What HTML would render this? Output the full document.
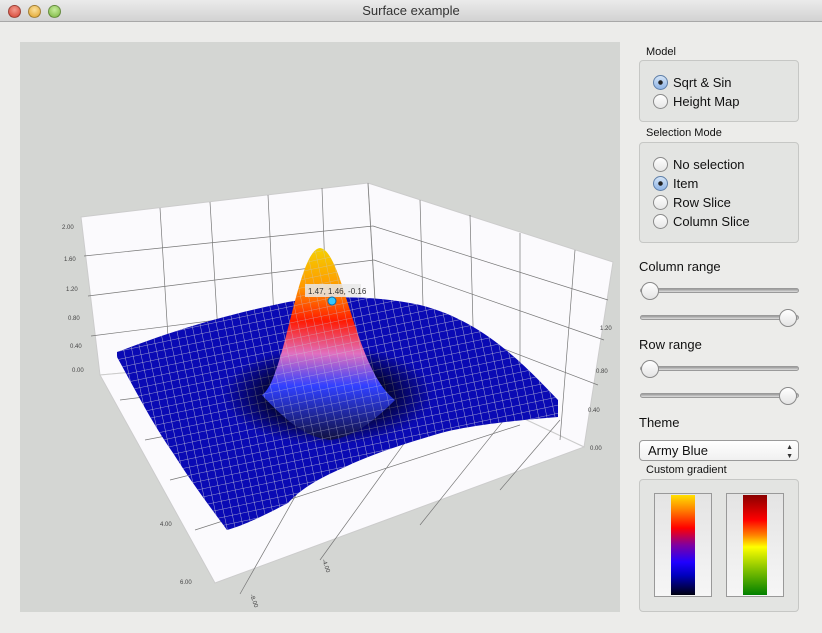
<!DOCTYPE html>
<html><head><meta charset="utf-8"><style>
*{margin:0;padding:0;box-sizing:border-box}
body{width:822px;height:633px;overflow:hidden;background:#ececea;font-family:"Liberation Sans",sans-serif;position:relative;color:#111}
.tb{position:absolute;left:0;top:0;width:822px;height:22px;background:linear-gradient(#ebebeb,#d2d2d2);border-bottom:1px solid #a8a8a8;text-align:center;font-size:13px;line-height:22px;color:#333}
.tl{position:absolute;top:5px;width:13px;height:13px;border-radius:50%;border:1px solid rgba(0,0,0,.3)}
.a{position:absolute}
.lbl{position:absolute;font-size:11px}
.big{position:absolute;font-size:13px}
.box{position:absolute;background:#e3e4e2;border:1px solid #c6c7c5;border-radius:4px}
.rad{position:absolute;width:15px;height:15px;border-radius:50%;border:1px solid #8a8a8a;background:linear-gradient(#fff,#e6e6e6)}
.rad.on{background:radial-gradient(circle,#222 0 2px,transparent 2.5px),linear-gradient(#d4e4f6,#8fb4e6);border-color:#5f7fa8}
.rt{position:absolute;font-size:13px}
.trk{position:absolute;left:640px;width:159px;height:5px;border-radius:3px;background:linear-gradient(#999,#ddd);border:1px solid #9a9a9a}
.knob{position:absolute;width:18px;height:18px;border-radius:50%;border:1px solid #8a8a8a;background:linear-gradient(#fff,#e4e4e4)}
</style></head><body>
<div class="tb">Surface example
<div class="tl" style="left:8px;background:radial-gradient(circle at 50% 35%,#f29a8e,#d5402f)"></div>
<div class="tl" style="left:28px;background:radial-gradient(circle at 50% 35%,#fbe09b,#e0a228)"></div>
<div class="tl" style="left:48px;background:radial-gradient(circle at 50% 35%,#c6ec9c,#79b53d)"></div>
</div>
<svg class="a" style="left:20px;top:42px" width="600" height="570" viewBox="20 42 600 570">
<defs>
<linearGradient id="pk" x1="0" y1="0" x2="0" y2="1">
<stop offset="0" stop-color="#f4d000"/><stop offset=".2" stop-color="#ff9a00"/><stop offset=".38" stop-color="#ff1a00"/><stop offset=".55" stop-color="#e070c0"/><stop offset=".72" stop-color="#3040ff"/><stop offset="1" stop-color="#101040"/></linearGradient>
<pattern id="mesh" width="8" height="8" patternUnits="userSpaceOnUse" patternTransform="rotate(-12)"><path d="M0 0H8M0 0V8" stroke="#c8c8d8" stroke-width="0.8"/></pattern>
<radialGradient id="hole" cx="0.5" cy="0.5" r="0.5"><stop offset=".45" stop-color="#000"/><stop offset="1" stop-color="#000" stop-opacity="0"/></radialGradient>
</defs>
<rect x="20" y="42" width="600" height="570" fill="#d4d6d3"/>
<polygon points="81,217 368,183 378,350 100,375" fill="#fbfafd" stroke="#ccc"/>
<polygon points="368,183 613,262 584,447 378,350" fill="#fbfafd" stroke="#ccc"/>
<polygon points="100,375 378,350 584,447 215,583" fill="#fbfafd" stroke="#ccc"/>
<g stroke="#777" stroke-width=".7" fill="none">
<path d="M84,256 373,226 M88,296 374,260 M91,336 376,300 M160,208 170,370 M210,202 220,366 M268,195 276,360 M322,188 328,355 M368,183 378,350"/>
<path d="M373,226 608,300 M374,260 604,340 M376,300 598,385 M420,200 425,375 M470,215 475,398 M520,233 520,420 M575,250 560,440"/>
<path d="M120,400 400,365 M145,440 430,385 M170,480 470,405 M195,530 520,425 M240,594 378,350 M320,560 450,380 M420,525 520,400 M500,490 560,420"/>
</g>
<g font-size="6" fill="#444">
<text x="62" y="229">2.00</text><text x="64" y="261">1.60</text><text x="66" y="291">1.20</text><text x="68" y="320">0.80</text><text x="70" y="348">0.40</text><text x="72" y="372">0.00</text>
<text x="588" y="412">0.40</text><text x="590" y="450">0.00</text><text x="596" y="373">0.80</text><text x="600" y="330">1.20</text>
<text x="180" y="584">6.00</text><text x="160" y="526">4.00</text><text x="250" y="595" transform="rotate(70 250 595)">-8.00</text><text x="322" y="560" transform="rotate(70 322 560)">-4.00</text>
</g>
<path d="M117,352 C150,340 200,320 288,302 C330,295 380,296 420,305 C480,320 520,360 558,400 L558,417 C520,420 470,425 441,433 C400,445 370,455 345,467 C315,480 300,490 288,503 C265,515 245,525 227,530 C205,500 190,480 173,453 C150,420 130,380 117,357 Z" fill="#0a0ab4"/>
<path d="M117,352 C150,340 200,320 288,302 C330,295 380,296 420,305 C480,320 520,360 558,400 L558,417 C520,420 470,425 441,433 C400,445 370,455 345,467 C315,480 300,490 288,503 C265,515 245,525 227,530 C205,500 190,480 173,453 C150,420 130,380 117,357 Z" fill="url(#mesh)"/>
<ellipse cx="328" cy="395" rx="105" ry="50" fill="url(#hole)" opacity=".85"/>
<path d="M262,395 C285,380 297,250 320,248 C343,250 355,370 395,400 C375,420 355,437 330,440 C305,437 285,420 262,395 Z" fill="url(#pk)"/>
<path d="M262,395 C285,380 297,250 320,248 C343,250 355,370 395,400 C375,420 355,437 330,440 C305,437 285,420 262,395 Z" fill="url(#mesh)" opacity=".7"/>
<rect x="305" y="284" width="56" height="13" fill="#e8e8e8" opacity=".85"/>
<text x="308" y="294" font-size="8" fill="#333">1.47, 1.46, -0.16</text>
<circle cx="332" cy="301" r="4" fill="#35c8ff" stroke="#0a6aa8"/>
</svg>

<div class="lbl" style="left:646px;top:46px">Model</div>
<div class="box" style="left:639px;top:60px;width:160px;height:62px"></div>
<div class="rad on" style="left:653px;top:75px"></div><div class="rt" style="left:673px;top:75px">Sqrt &amp; Sin</div>
<div class="rad" style="left:653px;top:94px"></div><div class="rt" style="left:673px;top:94px">Height Map</div>
<div class="lbl" style="left:646px;top:127px">Selection Mode</div>
<div class="box" style="left:639px;top:142px;width:160px;height:101px"></div>
<div class="rad" style="left:653px;top:157px"></div><div class="rt" style="left:673px;top:157px">No selection</div>
<div class="rad on" style="left:653px;top:176px"></div><div class="rt" style="left:673px;top:176px">Item</div>
<div class="rad" style="left:653px;top:195px"></div><div class="rt" style="left:673px;top:195px">Row Slice</div>
<div class="rad" style="left:653px;top:214px"></div><div class="rt" style="left:673px;top:214px">Column Slice</div>
<div class="big" style="left:639px;top:259px">Column range</div>
<div class="trk" style="top:288px"></div><div class="knob" style="left:641px;top:282px"></div>
<div class="trk" style="top:315px"></div><div class="knob" style="left:779px;top:309px"></div>
<div class="big" style="left:639px;top:337px">Row range</div>
<div class="trk" style="top:366px"></div><div class="knob" style="left:641px;top:360px"></div>
<div class="trk" style="top:393px"></div><div class="knob" style="left:779px;top:387px"></div>
<div class="big" style="left:639px;top:415px">Theme</div>
<div class="a" style="left:639px;top:440px;width:160px;height:21px;border:1px solid #9a9a9a;border-radius:4px;background:linear-gradient(#fff,#f0f0f0);font-size:13px;line-height:19px;padding-left:8px">Army Blue<span style="position:absolute;right:5px;top:0;font-size:7px;line-height:9px;top:2px;color:#333">▲<br>▼</span></div>
<div class="lbl" style="left:646px;top:464px">Custom gradient</div>
<div class="box" style="left:639px;top:479px;width:160px;height:133px"></div>
<div class="a" style="left:654px;top:493px;width:58px;height:104px;border:1px solid #999;background:linear-gradient(#e4e4e4,#f6f6f6)"></div>
<div class="a" style="left:671px;top:495px;width:24px;height:100px;background:linear-gradient(#ffe000,#ff8000 15%,#ff0000 33%,#8000a0 50%,#2000ff 67%,#0000c0 80%,#000010)"></div>
<div class="a" style="left:726px;top:493px;width:58px;height:104px;border:1px solid #999;background:linear-gradient(#e4e4e4,#f6f6f6)"></div>
<div class="a" style="left:743px;top:495px;width:24px;height:100px;background:linear-gradient(#8a0000,#ff0000 25%,#ff8000 40%,#ffff00 52%,#80c000 75%,#008000)"></div>
</body></html>
